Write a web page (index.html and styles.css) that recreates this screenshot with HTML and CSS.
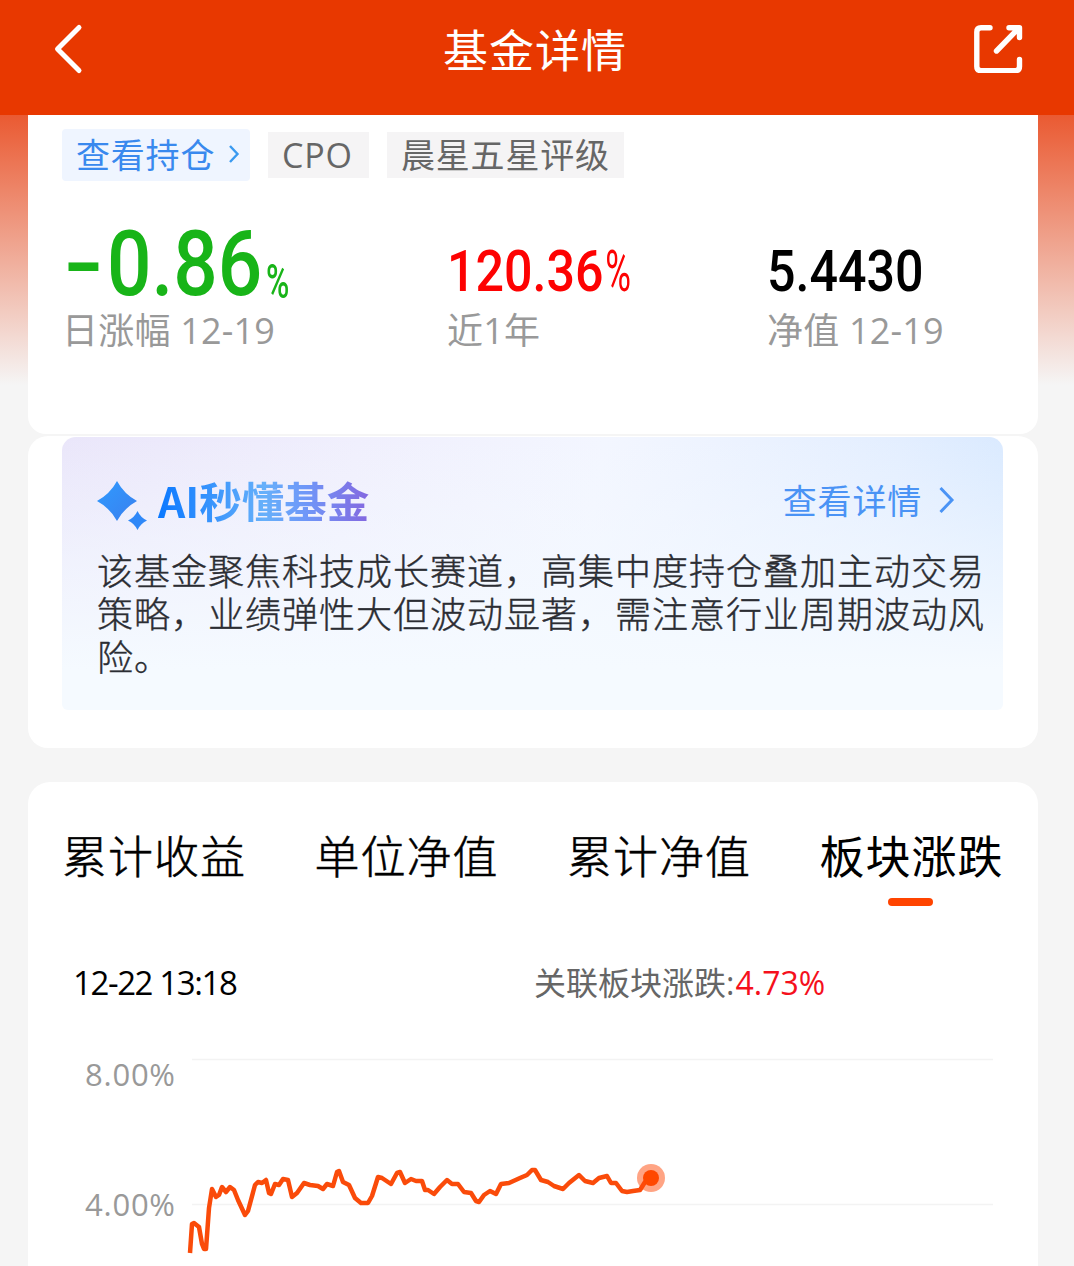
FILE: index.html
```html
<!DOCTYPE html>
<html lang="zh-CN">
<head>
    <meta charset="UTF-8">
    <meta name="viewport" content="width=device-width, initial-scale=1.0">
    <title>基金详情</title>
    <link rel="stylesheet" href="styles.css">
</head>
<body>
    <header class="header">
        <svg class="back" width="30" height="52" viewBox="0 0 30 52" fill="none" stroke="#fff" stroke-width="5" stroke-linecap="round" stroke-linejoin="round">
            <path d="M26 4.5 4.5 26 26 47.5"/>
        </svg>
        <h1 class="title">基金详情</h1>
        <svg class="share" width="50" height="50" viewBox="0 0 50 50" fill="none" stroke="#fff" stroke-width="5.4" stroke-linecap="round" stroke-linejoin="round">
            <path d="M17 4.8H8Q3.8 4.8 3.8 9V43.500Q3.800 47.600 8 47.600H42.500Q46.500 47.600 46.500 43.500V36.500"/>
            <path d="M36 4.800H46.500V14.500M45 6 23.500 28"/>
        </svg>
    </header>

    <main class="page">
        <section class="card summary">
            <div class="tags">
                <span class="tag tag-link">查看持仓
                    <svg width="12" height="20" viewBox="0 0 12 20" fill="none" stroke="#3a9af0" stroke-width="2.4"><path d="M2 1 9.500 9 2 17"/></svg>
                </span>
                <span class="tag tag-cpo">CPO</span>
                <span class="tag">晨星五星评级</span>
            </div>
            <div class="stats">
                <div class="stat stat-day">
                    <div class="value green"><span class="minus">-</span><span class="num-big">0.86</span><span class="unit">%</span></div>
                    <div class="label">日涨幅 12-19</div>
                </div>
                <div class="stat stat-year">
                    <div class="value red"><span class="num">120.36<span class="pct">%</span></span></div>
                    <div class="label">近1年</div>
                </div>
                <div class="stat">
                    <div class="value"><span class="num">5.4430</span></div>
                    <div class="label">净值 12-19</div>
                </div>
            </div>
        </section>

        <section class="card ai-card">
            <div class="ai">
                <div class="ai-head">
                    <svg class="stars" width="52" height="50" viewBox="0 0 52 50">
                        <defs>
                            <linearGradient id="star" x1="0" y1="0" x2="1" y2="1">
                                <stop offset="0" stop-color="#2f9bff"/>
                                <stop offset="1" stop-color="#3a7fee"/>
                            </linearGradient>
                        </defs>
                        <path fill="url(#star)" d="M21 1Q28 14 41 21 28 28 21 41 14 28 1 21 14 14 21 1Z"/>
                        <path fill="#2f88f8" d="M41.500 31Q44.500 37.500 51 40.500 44.500 43.500 41.500 50 38.500 43.500 32 40.500 38.500 37.500 41.500 31Z"/>
                    </svg>
                    <h2 class="ai-title">AI秒懂基金</h2>
                    <a class="ai-more">查看详情
                        <svg width="18" height="28" viewBox="0 0 18 28" fill="none" stroke="#4a93f5" stroke-width="3"><path d="M2.500 2 14 14 2.500 26"/></svg>
                    </a>
                </div>
                <p class="ai-text">该基金聚焦科技成长赛道，高集中度持仓叠加主动交易策略，业绩弹性大但波动显著，需注意行业周期波动风险。</p>
            </div>
        </section>

        <section class="card chart-card">
            <nav class="tabs">
                <a class="tab">累计收益</a>
                <a class="tab">单位净值</a>
                <a class="tab">累计净值</a>
                <a class="tab active">板块涨跌</a>
            </nav>
            <div class="info">
                <span class="time">12-22 13:18</span>
                <span class="related">关联板块涨跌:<span class="related-value">4.73%</span></span>
            </div>
            <svg class="chart" width="1010" height="226" viewBox="28 1040 1010 226">
                <path d="M192 1059.500H993M192 1204.500H993" stroke="#f3f3f3" stroke-width="1.500"/>
                <text class="axis" x="85" y="1085.500" textLength="90">8.00%</text>
                <text class="axis" x="85" y="1215.500" textLength="90">4.00%</text>
                <polyline class="line" points="190,1253 192,1224 194,1223 199,1227 202,1244 204,1249 206,1249 209,1208 212,1189 216,1197 219,1195 222,1187 226,1192 230,1187 234,1190 238,1200 245,1215 248,1211 255,1185 258,1182 262,1183 266,1180 269,1193 271,1194 275,1184 279,1185 283,1179 288,1180 292,1197 297,1193 304,1183 310,1185 318,1186 323,1189 327,1184 333,1186 337,1172 339,1171 343,1182 349,1185 355,1198 361,1203 368,1203 372,1196 378,1177 382,1178 391,1184 397,1173 400,1172 405,1183 411,1179 416,1181 422,1181 425,1190 428,1190 434,1194 440,1187 447,1180 452,1184 458,1184 464,1192 471,1193 476,1201 479,1202 484,1195 490,1191 496,1194 501,1184 509,1183 520,1178 527,1175 532,1170 535,1170 541,1180 548,1182 554,1186 563,1189 569,1183 579,1175 585,1181 593,1183 599,1178 607,1176 611,1183 616,1183 622,1191 627,1192 633,1191 640,1190 645,1182 651,1178"/>
                <circle cx="651" cy="1178" r="14" fill="#ff4a0a" fill-opacity=".5"/>
                <circle cx="651" cy="1178" r="8" fill="#ff4800"/>
            </svg>
        </section>
    </main>
</body>
</html>
```
FILE: styles.css
```css
* {
    box-sizing: border-box;
}
body {
    margin: 0;
    height: 1266px;
    overflow: hidden;
    background: #f5f5f5;
    color: #000;
    font-family: "Open Sans", "Noto Sans CJK SC", sans-serif;
    font-weight: 400;
}
h1, h2, p {
    margin: 0;
}
.header {
    display: flex;
    justify-content: space-between;
    height: 115px;
    padding: 23px 51px 0 53px;
    background: #e83800;
}
.title {
    margin-left: 14px;
    color: #fff;
    font-size: 45px;
    font-weight: 400;
    letter-spacing: 1px;
    line-height: 56px;
}
.page {
    padding: 0 36px 0 28px;
    background: linear-gradient(#ea5a32, #f5f5f5 270px);
}
.card {
    background: #fff;
    border-radius: 20px;
}
.summary {
    height: 319px;
    padding: 14px 34px 0;
    border-radius: 0 0 18px 18px;
}
.tags {
    display: flex;
    align-items: center;
    gap: 18px;
    height: 52px;
}
.tag {
    height: 46px;
    padding: 0 14px;
    background: #f5f4f5;
    color: #666;
    font-size: 34px;
    letter-spacing: 0.8px;
    line-height: 46px;
}
.tag-cpo {
    width: 101px;
}
.tag-link {
    display: flex;
    align-items: center;
    justify-content: space-between;
    width: 188px;
    height: 52px;
    padding: 0 10px 1px 14px;
    border-radius: 4px;
    background: #eff5ff;
    color: #3989ee;
}
.stats {
    display: flex;
    padding-top: 40px;
}
.stat-day {
    width: 385px;
}
.stat-year {
    width: 320px;
}
.value {
    display: flex;
    align-items: flex-end;
    height: 86px;
    font-family: Roboto, sans-serif;
    font-weight: 500;
    white-space: nowrap;
}
.num {
    font-size: 58px;
    line-height: 72px;
    transform: scaleX(0.865);
    transform-origin: 0 50%;
}
.minus {
    width: 43px;
    margin-left: 2px;
    font-size: 91px;
    line-height: 88px;
    transform: scaleX(1.27);
    transform-origin: 0 50%;
}
.num-big {
    width: 159px;
    font-size: 91px;
    line-height: 86px;
    transform: scaleX(0.86);
    transform-origin: 0 50%;
}
.unit {
    font-size: 48px;
    line-height: 50px;
    transform: scaleX(0.66);
    transform-origin: 0 50%;
}
.pct {
    display: inline-block;
    margin-left: 2px;
    font-weight: 400;
    transform: scaleX(0.7);
    transform-origin: 0 50%;
}
.green {
    color: #18b418;
}
.red {
    color: #fd0202;
}
.label {
    margin-top: 2px;
    color: #999;
    font-size: 36px;
    letter-spacing: 0.2px;
    line-height: 44px;
}
.ai-card {
    height: 312px;
    margin-top: 2px;
    padding: 1px 34px 0;
}
.ai {
    width: 941px;
    height: 273px;
    padding: 36px 10px 0 35px;
    border-radius: 14px 14px 6px 6px;
    background:
        linear-gradient(rgba(244, 249, 255, 0) 0%, rgba(244, 249, 255, 0.6) 45%, #f5faff 85%),
        linear-gradient(100deg, #eae6fa 0%, #f0effd 30%, #f3f6ff 55%, #e3eeff 85%, #d6e8ff 100%);
}
.ai-head {
    display: flex;
    height: 77px;
}
.stars {
    margin: 7px 0 0 -1px;
}
.ai-title {
    margin-left: 10px;
    background: linear-gradient(90deg, #0a78ff, #66b0fa 50%, #6f97f8 70%, #8468e0);
    -webkit-background-clip: text;
    background-clip: text;
    color: transparent;
    font-family: "Noto Sans CJK SC", sans-serif;
    font-size: 42.5px;
    font-weight: 700;
    line-height: 54px;
}
.ai-more {
    display: flex;
    align-items: center;
    gap: 16px;
    height: 53px;
    margin-left: auto;
    margin-right: 37px;
    color: #4a93f5;
    font-size: 34px;
    letter-spacing: 0.8px;
}
.ai-text {
    color: #2b2d33;
    font-size: 36px;
    font-weight: 300;
    letter-spacing: 1px;
    line-height: 43px;
    -webkit-text-stroke: 0.4px;
}
.chart-card {
    height: 520px;
    margin-top: 34px;
    padding-top: 42px;
    border-radius: 22px;
}
.tabs {
    display: flex;
    gap: 68.5px;
    padding: 0 34px;
}
.tab {
    position: relative;
    width: 184px;
    font-size: 45px;
    font-weight: 300;
    letter-spacing: 1px;
    line-height: 66px;
    white-space: nowrap;
    -webkit-text-stroke: 0.5px;
}
.tab.active {
    font-weight: 400;
    -webkit-text-stroke: 0;
}
.tab.active::after {
    content: "";
    position: absolute;
    left: 68px;
    top: 74px;
    width: 45px;
    height: 8px;
    border-radius: 4px;
    background: #ff4400;
}
.info {
    display: flex;
    height: 150px;
    padding: 68px 45px 0;
    font-size: 32px;
    line-height: 50px;
}
.time {
    width: 461px;
    font-size: 33px;
    letter-spacing: -1.4px;
}
.related {
    color: #666;
}
.related-value {
    margin-left: 1px;
    color: #f5101c;
}
.chart {
    display: block;
}
.axis {
    fill: #999;
    font-size: 31px;
}
.line {
    fill: none;
    stroke: #fa4b0a;
    stroke-width: 4.5;
    stroke-linejoin: round;
}
```
